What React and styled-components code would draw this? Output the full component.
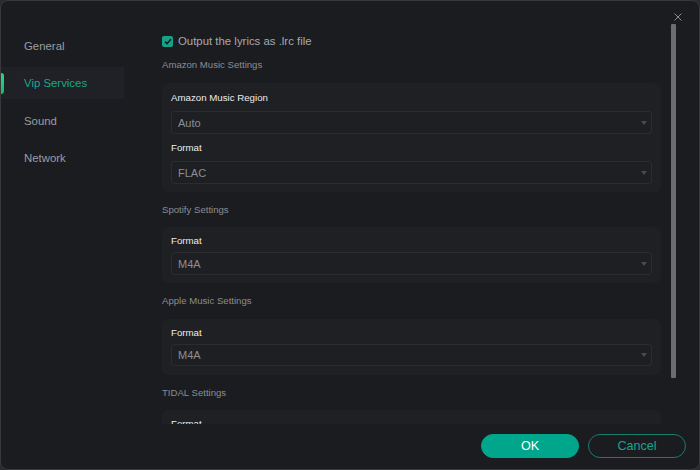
import React from 'react';
import styled, { createGlobalStyle } from 'styled-components';

const GlobalStyle = createGlobalStyle`
  html, body {
    margin: 0;
    padding: 0;
    background: #2a2b2f;
  }
  * {
    box-sizing: border-box;
  }
`;

const Window = styled.div`
  width: 700px;
  height: 470px;
  display: flex;
  flex-direction: column;
  background: #1b1c20;
  border: 1px solid #37383c;
  border-radius: 8px;
  overflow: hidden;
  font-family: 'Liberation Sans', Arial, sans-serif;
`;

const Main = styled.div`
  flex: 1;
  min-height: 0;
  display: flex;
`;

const Sidebar = styled.nav`
  width: 123px;
  flex-shrink: 0;
  display: flex;
  flex-direction: column;
  gap: 5.5px;
  padding-top: 28.5px;
`;

const NavItem = styled.div`
  position: relative;
  height: 32px;
  display: flex;
  align-items: center;
  padding-left: 23px;
  font-size: 11.4px;
  color: ${p => (p.active ? '#17a88b' : '#9b9ca1')};
  background: ${p => (p.active ? '#202126' : 'transparent')};

  &::before {
    content: '';
    display: ${p => (p.active ? 'block' : 'none')};
    position: absolute;
    left: -1px;
    top: 6px;
    width: 4px;
    height: 21px;
    border-radius: 0 3px 3px 0;
    background: linear-gradient(180deg, #2bdc7f, #14b96c);
  }
`;

const ContentColumn = styled.div`
  flex: 1;
  min-width: 0;
  display: flex;
  flex-direction: column;
`;

const TopBar = styled.div`
  height: 23px;
  flex-shrink: 0;
  display: flex;
  justify-content: flex-end;
  align-items: flex-end;
  padding-right: 16px;
`;

const CloseButton = styled.button`
  width: 11px;
  height: 11px;
  padding: 0;
  border: none;
  background: none;
  display: flex;
  align-items: center;
  justify-content: center;
  margin-bottom: 2px;
  color: #8a8b90;
`;

const ScrollRow = styled.div`
  flex: 1;
  min-height: 0;
  display: flex;
`;

const ScrollView = styled.div`
  flex: 1;
  min-width: 0;
  overflow: hidden;
  padding: 10.3px 7px 0 38px;
`;

const ScrollTrack = styled.div`
  width: 5px;
  margin: 0 23px 0 3px;
  flex-shrink: 0;
`;

const ScrollThumb = styled.div`
  width: 5px;
  height: 354px;
  background: #6c6d71;
  border-radius: 1px;
`;

const CheckRow = styled.label`
  display: flex;
  align-items: center;
  gap: 5px;
  height: 14px;
  margin-bottom: 10px;
  font-size: 11.4px;
  color: #a8a9ad;
`;

const CheckBox = styled.span`
  width: 11px;
  height: 11px;
  border-radius: 2px;
  background: #14a388;
  display: flex;
  align-items: center;
  justify-content: center;
`;

const Section = styled.section`
  & + & {
    margin-top: 11px;
  }
`;

const SectionTitle = styled.div`
  height: 14px;
  line-height: 14px;
  font-size: 9.6px;
  color: #8b8c91;
  margin-bottom: 10.5px;
`;

const Card = styled.div`
  background: #1f2024;
  border-radius: 6px;
  padding: ${p => (p.loose ? '8px 9px 8px' : '7px 9px 8.5px')};
`;

const Field = styled.div`
  & + & {
    margin-top: 7px;
  }
`;

const FieldLabel = styled.div`
  height: 14px;
  line-height: 14px;
  font-size: 9.7px;
  color: #ececee;
  margin-bottom: ${p => (p.loose ? '6.5px' : '4px')};
`;

const Select = styled.div`
  height: 22.5px;
  display: flex;
  align-items: center;
  justify-content: space-between;
  padding: 0 4px 0 6px;
  border: 1px solid #2b2c31;
  border-radius: 3px;
  background: #1e1f23;
  font-size: 11px;
  color: #8d8e93;
`;

const Caret = styled.span`
  width: 0;
  height: 0;
  border-left: 3.5px solid transparent;
  border-right: 3.5px solid transparent;
  border-top: 4px solid #4a4b50;
`;

const Footer = styled.div`
  height: 45px;
  flex-shrink: 0;
  display: flex;
  justify-content: flex-end;
  align-items: flex-start;
  gap: 9px;
  padding: 10px 13px 0 0;
`;

const Button = styled.button`
  width: 98px;
  height: 24px;
  border-radius: 12px;
  font-family: 'Liberation Sans', Arial, sans-serif;
  font-size: 12.6px;
  padding: 0;
  border: 1px solid ${p => (p.primary ? '#00a68c' : '#177d6c')};
  background: ${p => (p.primary ? '#00a68c' : 'transparent')};
  color: ${p => (p.primary ? '#ffffff' : '#17a58c')};
`;

const navItems = ['General', 'Vip Services', 'Sound', 'Network'];

const sections = [
  {
    title: 'Amazon Music Settings',
    loose: true,
    fields: [
      { label: 'Amazon Music Region', value: 'Auto' },
      { label: 'Format', value: 'FLAC' },
    ],
  },
  { title: 'Spotify Settings', fields: [{ label: 'Format', value: 'M4A' }] },
  { title: 'Apple Music Settings', fields: [{ label: 'Format', value: 'M4A' }] },
  { title: 'TIDAL Settings', fields: [{ label: 'Format', value: 'M4A' }] },
];

const App = () => {
  return (
    <>
      <GlobalStyle />
      <Window>
        <Main>
          <Sidebar>
            {navItems.map(item => (
              <NavItem key={item} active={item === 'Vip Services'}>
                {item}
              </NavItem>
            ))}
          </Sidebar>
          <ContentColumn>
            <TopBar>
              <CloseButton aria-label="Close">
                <svg width="8" height="8" viewBox="0 0 8 8">
                  <path d="M0.5 0.5L7.5 7.5M7.5 0.5L0.5 7.5" stroke="currentColor" strokeWidth="1" />
                </svg>
              </CloseButton>
            </TopBar>
            <ScrollRow>
              <ScrollView>
                <CheckRow>
                  <CheckBox>
                    <svg width="8" height="7" viewBox="0 0 8 7">
                      <path d="M1 3.6L3 5.5L7 1.2" fill="none" stroke="#1b1c20" strokeWidth="1.6" />
                    </svg>
                  </CheckBox>
                  Output the lyrics as .lrc file
                </CheckRow>
                {sections.map(section => (
                  <Section key={section.title}>
                    <SectionTitle>{section.title}</SectionTitle>
                    <Card loose={section.loose}>
                      {section.fields.map(field => (
                        <Field key={field.label}>
                          <FieldLabel loose={section.loose}>{field.label}</FieldLabel>
                          <Select>
                            {field.value}
                            <Caret />
                          </Select>
                        </Field>
                      ))}
                    </Card>
                  </Section>
                ))}
              </ScrollView>
              <ScrollTrack>
                <ScrollThumb />
              </ScrollTrack>
            </ScrollRow>
          </ContentColumn>
        </Main>
        <Footer>
          <Button primary>OK</Button>
          <Button>Cancel</Button>
        </Footer>
      </Window>
    </>
  );
};

export default App;
